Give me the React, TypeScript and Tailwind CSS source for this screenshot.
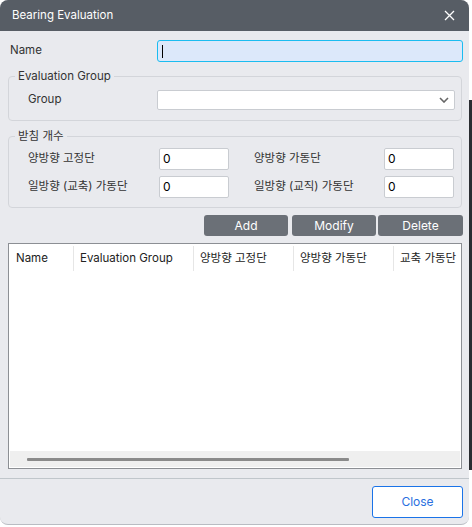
import React from "react";

const font = { fontFamily: "Inter, 'Noto Sans CJK KR', sans-serif" };

function NumInput() {
  return (
    <div className="w-[70px] h-[22px] shrink-0 bg-white border border-[#c9ccd1] rounded-[2px] flex items-center px-[3px] text-[12px] text-black">0</div>
  );
}

export default function App() {
  return (
    <div className="w-[472px] h-[527px] bg-white relative" style={font}>
      <div className="absolute right-0 top-[100px] w-[3px] h-[370px] bg-[#2a2d31]" />
      <div className="w-[469px] h-[525px] bg-[#e9eaee] rounded-[8px] overflow-hidden flex flex-col border-b border-[#b9bcc2]">
        <div className="h-[31px] shrink-0 bg-[#575d65] flex items-center justify-between pl-[12px] pr-[14px]">
          <span className="text-white text-[11.5px] mt-[1px]">Bearing Evaluation</span>
          <svg width="11" height="11" viewBox="0 0 11 11"><path d="M1 1L10 10M10 1L1 10" stroke="white" strokeWidth="1.3" /></svg>
        </div>
        <div className="flex flex-col px-[8px] pt-[9px] text-[11.5px] text-[#333]">
          <div className="flex items-center h-[22px]">
            <span className="w-[149px] pl-[2px]">Name</span>
            <div className="flex-1 h-[22px] mr-[-2px] bg-[#dce8fa] border border-[#1bbcf0] rounded-[3px] flex items-center pl-[4px]">
              <div className="w-[1px] h-[13px] bg-black" />
            </div>
          </div>
          <fieldset className="mt-[7px] border border-[#d3d5da] rounded-[4px] px-[0px] pb-[10px] mr-[-1px]">
            <legend className="ml-[6px] px-[3px] leading-[14px]">Evaluation Group</legend>
            <div className="flex items-center h-[20px] mt-[7px]">
              <span className="w-[148px] pl-[19px]">Group</span>
              <div className="w-[298px] h-[20px] bg-white border border-[#c9ccd1] rounded-[2px] flex items-center justify-end pr-[5px]">
                <svg width="10" height="6" viewBox="0 0 10 6"><path d="M1 1L5 5L9 1" stroke="#666" strokeWidth="1.6" fill="none" /></svg>
              </div>
            </div>
          </fieldset>
          <fieldset className="mt-[8px] border border-[#d3d5da] rounded-[4px] pb-[9px] mr-[-1px]">
            <legend className="ml-[6px] px-[3px] leading-[14px]">받침 개수</legend>
            <div className="flex flex-col gap-[6px] mt-[5px]">
              <div className="flex items-center">
                <span className="w-[150px] pl-[19px]">양방향 고정단</span>
                <NumInput />
                <span className="w-[155px] pl-[25px]">양방향 가동단</span>
                <NumInput />
              </div>
              <div className="flex items-center">
                <span className="w-[150px] pl-[19px]">일방향 (교축) 가동단</span>
                <NumInput />
                <span className="w-[155px] pl-[25px]">일방향 (교직) 가동단</span>
                <NumInput />
              </div>
            </div>
          </fieldset>
          <div className="flex justify-end mt-[7px] mr-[-2px]">
            <button className="w-[84px] h-[21px] bg-[#6b7077] text-white rounded-[3px] text-[12px]">Add</button>
            <button className="w-[84px] h-[21px] ml-[4px] bg-[#6b7077] text-white rounded-[3px] text-[12px]">Modify</button>
            <button className="w-[85px] h-[21px] ml-[2px] bg-[#6b7077] text-white rounded-[3px] text-[12px]">Delete</button>
          </div>
          <div className="mt-[7px] h-[226px] bg-white border border-[#8c8f94] flex flex-col mr-[-1px]">
            <div className="flex items-center h-[25px] mt-[2px] text-[11.5px] text-[#222] whitespace-nowrap overflow-hidden">
              <div className="w-[65px] shrink-0 pl-[7px] border-r border-[#e6e6e6] h-[25px] flex items-center">Name</div>
              <div className="w-[120px] shrink-0 pl-[6px] border-r border-[#e6e6e6] h-[25px] flex items-center">Evaluation Group</div>
              <div className="w-[100px] shrink-0 pl-[6px] border-r border-[#e6e6e6] h-[25px] flex items-center">양방향 고정단</div>
              <div className="w-[100px] shrink-0 pl-[6px] border-r border-[#e6e6e6] h-[25px] flex items-center">양방향 가동단</div>
              <div className="w-[80px] shrink-0 pl-[6px] h-[25px] flex items-center">교축 가동단</div>
            </div>
            <div className="flex-1" />
            <div className="h-[16px] bg-[#efefef] mx-[1px] mb-[1px] flex items-center pl-[17px]">
              <div className="w-[322px] h-[3px] bg-[#8a8a8a] rounded-[1px]" />
            </div>
          </div>
        </div>
        <div className="mt-[9px] h-[1px] shrink-0 bg-[#c0c6cb]" />
        <div className="flex justify-end pr-[6px] pt-[7px]">
          <button className="w-[91px] h-[32px] bg-white border border-[#1a73e8] rounded-[3px] text-[#2a6fe0] text-[12px]">Close</button>
        </div>
      </div>
    </div>
  );
}
